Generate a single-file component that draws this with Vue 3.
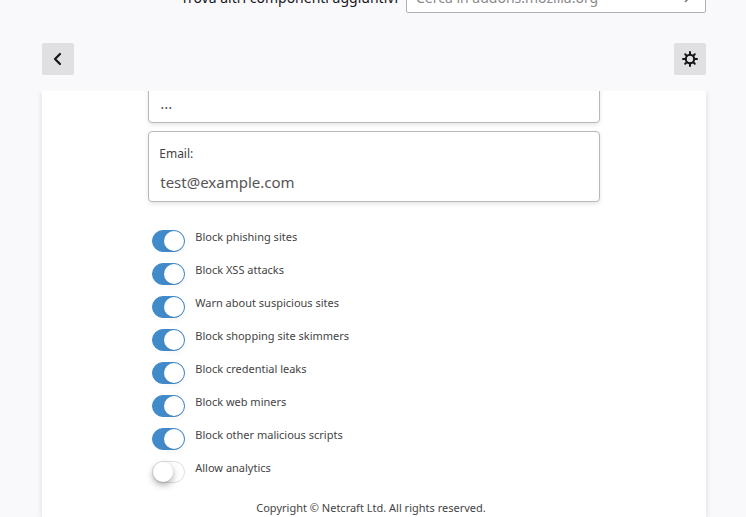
<script setup>
import { ref } from 'vue'

const query = ref('')
const name = ref('...')
const email = ref('test@example.com')
const options = ref([
  { id: 'phishing', label: 'Block phishing sites', on: true },
  { id: 'xss', label: 'Block XSS attacks', on: true },
  { id: 'suspicious', label: 'Warn about suspicious sites', on: true },
  { id: 'skimmers', label: 'Block shopping site skimmers', on: true },
  { id: 'leaks', label: 'Block credential leaks', on: true },
  { id: 'miners', label: 'Block web miners', on: true },
  { id: 'scripts', label: 'Block other malicious scripts', on: true },
  { id: 'analytics', label: 'Allow analytics', on: false },
])
</script>

<template>
  <div class="page">
    <form class="search" @submit.prevent>
      <label class="search-label" for="addon-search">Trova altri componenti aggiuntivi</label>
      <div class="search-box">
        <input id="addon-search" v-model="query" type="text" placeholder="Cerca in addons.mozilla.org" />
        <button class="go" type="submit" aria-label="Cerca">
          <svg width="16" height="16" viewBox="0 0 16 16" fill="none" stroke="currentColor" stroke-width="1.5">
            <path d="M1 8h12M8 3l5 5-5 5" />
          </svg>
        </button>
      </div>
    </form>

    <header class="toolbar">
      <button class="tool" type="button" aria-label="Indietro">
        <svg width="16" height="16" viewBox="0 0 16 16" fill="none" stroke="currentColor" stroke-width="2.2" stroke-linecap="round" stroke-linejoin="round">
          <path d="M10 3L5 8l5 5" />
        </svg>
      </button>
      <button class="tool" type="button" aria-label="Strumenti">
        <svg width="16" height="16" viewBox="0 0 16 16" fill="none" stroke="currentColor" stroke-width="2" stroke-linecap="round">
          <circle cx="8" cy="8" r="4.200" />
          <path d="M8 1v2.500M8 12.500V15M1 8h2.500M12.500 8H15M3.200 3.200l1.700 1.700M11.100 11.100l1.700 1.700M3.200 12.800l1.700-1.700M11.100 4.900l1.700-1.700" />
        </svg>
      </button>
    </header>

    <main class="panel">
      <div class="settings">
        <div class="clip">
          <div class="field">
            <label for="name">Name:</label>
            <input id="name" v-model="name" type="text" />
          </div>
        </div>
        <div class="field">
          <label for="email">Email:</label>
          <input id="email" v-model="email" type="email" />
        </div>
        <ul class="options">
          <li v-for="o in options" :key="o.id">
            <input :id="o.id" v-model="o.on" class="switch" type="checkbox" />
            <label :for="o.id">{{ o.label }}</label>
          </li>
        </ul>
        <footer class="copyright">Copyright © Netcraft Ltd. All rights reserved.</footer>
      </div>
    </main>
  </div>
</template>

<style>
body {
  background: #f9f9fb;
}
</style>

<style scoped>
.page {
  display: flex;
  flex-direction: column;
  height: 100vh;
  padding: 0 40px 0 42px;
  box-sizing: border-box;
  overflow: hidden;
  color: #15141a;
  font-family: "Noto Sans", "Open Sans", sans-serif;
}
.search {
  display: flex;
  flex: none;
  align-items: flex-end;
  justify-content: flex-end;
  gap: 8px;
  height: 13px;
  overflow: hidden;
}
.search-label {
  font-size: 14px;
  line-height: 30px;
}
.search-box {
  display: flex;
  align-items: center;
  width: 300px;
  height: 32px;
  box-sizing: border-box;
  border: 1px solid #b0b0b4;
  border-radius: 2px;
  background: #fff;
}
.search-box input {
  flex: 1;
  min-width: 0;
  padding: 0 9px;
  border: 0;
  outline: 0;
  background: none;
  font: 14px "Noto Sans", "Open Sans", sans-serif;
}
.search-box input::placeholder {
  color: #8a8a8e;
}
.go {
  display: flex;
  padding: 0 12px;
  border: 0;
  background: none;
  color: #77777b;
}
.toolbar {
  display: flex;
  flex: none;
  justify-content: space-between;
  padding: 30px 0 16px;
}
.tool {
  display: flex;
  align-items: center;
  justify-content: center;
  width: 32px;
  height: 32px;
  padding: 0;
  border: 0;
  border-radius: 2px;
  background: #e0e0e2;
  color: #15141a;
}
.panel {
  flex: 1;
  min-height: 0;
  background: #fff;
  box-shadow: 0 1px 5px rgba(58, 57, 68, 0.16);
  clip-path: inset(0 -8px);
}
.settings {
  width: 68%;
  margin: 0 auto;
  color: #444;
}
.clip {
  display: flex;
  align-items: flex-end;
  height: 32px;
  margin-bottom: 8px;
  clip-path: inset(0 -4px -6px);
}
.field {
  display: flex;
  flex-direction: column;
  width: 100%;
  height: 71px;
  flex-shrink: 0;
  padding: 12px 10px 0;
  box-sizing: border-box;
  border: 1px solid #b8b8b8;
  border-radius: 4px;
  background: #fff;
  box-shadow: 0 2px 4px rgba(0, 0, 0, 0.1);
}
.field label {
  font-size: 12px;
  line-height: 20px;
}
.field input {
  width: 100%;
  height: 26px;
  margin-top: 5px;
  padding: 0 1px;
  box-sizing: border-box;
  border: 0;
  outline: 0;
  background: none;
  color: #555;
  font: 15px "Noto Sans", "Open Sans", sans-serif;
}
.options {
  display: grid;
  gap: 11px;
  margin: 28px 0 0;
  padding: 0 4px;
  list-style: none;
}
.options li {
  display: flex;
  gap: 10px;
  height: 22px;
}
.options label {
  font-size: 11px;
  line-height: 14px;
}
.switch {
  display: flex;
  appearance: none;
  width: 33px;
  height: 22px;
  margin: 0;
  box-sizing: border-box;
  border: 1px solid #dfdfdf;
  border-radius: 11px;
  background: #fff;
}
.switch::before {
  content: "";
  width: 20px;
  height: 20px;
  border-radius: 50%;
  background: #fff;
  box-shadow: 0 3px 7px rgba(0, 0, 0, 0.35);
}
.switch:checked {
  justify-content: flex-end;
  border-color: #428bca;
  background: #428bca;
}
.switch:checked::before {
  box-shadow: 0 3px 7px rgba(0, 0, 0, 0.06);
}
.copyright {
  margin-top: 16px;
  padding-right: 6px;
  font-size: 11px;
  line-height: 18px;
  text-align: center;
}
</style>
